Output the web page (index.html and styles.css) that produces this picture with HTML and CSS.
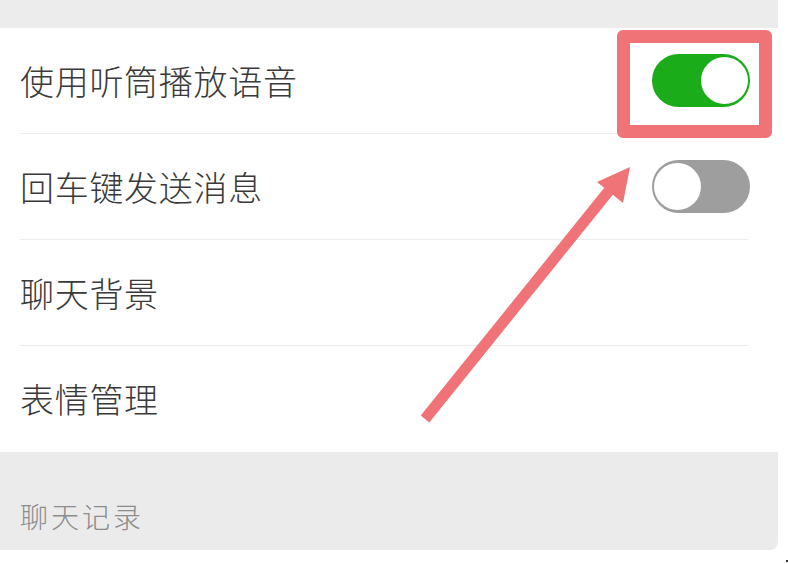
FILE: index.html
```html
<!DOCTYPE html>
<html lang="zh">
<head>
<meta charset="utf-8">
<link rel="stylesheet" href="styles.css">
</head>
<body>
<div class="page">
  <div class="panel">
    <div class="top-band"></div>
    <div class="list">
      <div class="row">
        <span class="label">使用听筒播放语音</span>
        <span class="switch on"><span class="knob"></span></span>
      </div>
      <div class="row">
        <span class="label">回车键发送消息</span>
        <span class="switch off"><span class="knob"></span></span>
      </div>
      <div class="row">
        <span class="label">聊天背景</span>
      </div>
      <div class="row last">
        <span class="label">表情管理</span>
      </div>
    </div>
    <div class="section-head">
      <span class="section-title">聊天记录</span>
    </div>
  </div>
  <div class="highlight"></div>
  <svg class="arrow" width="788" height="564" viewBox="0 0 788 564">
    <line x1="425" y1="419" x2="612" y2="187" stroke="#ef7377" stroke-width="11" stroke-linecap="butt"/>
    <polygon points="630,167 597,182 623,203" fill="#ef7377"/>
  </svg>
  <span class="dot"></span>
</div>
</body>
</html>
```
FILE: styles.css
```css
html, body {
  margin: 0;
  padding: 0;
  background: #ffffff;
}
.page {
  position: relative;
  width: 788px;
  height: 564px;
  overflow: hidden;
  font-family: "Noto Sans CJK SC", "Noto Sans", sans-serif;
}
.panel {
  width: 778px;
  display: flex;
  flex-direction: column;
}
.top-band {
  height: 28px;
  background: #ececec;
}
.list {
  background: #ffffff;
  display: flex;
  flex-direction: column;
}
.row {
  height: 106px;
  display: flex;
  align-items: center;
  justify-content: space-between;
  margin-left: 20px;
  margin-right: 30px;
  border-bottom: 1px solid #ececec;
  box-sizing: border-box;
}
.row.last {
  border-bottom: none;
}
.label {
  font-size: 34px;
  font-weight: 300;
  letter-spacing: 0.7px;
  color: #3a3a3a;
  line-height: 1;
}
.switch {
  width: 98px;
  height: 53px;
  margin-right: -2px;
  border-radius: 27px;
  box-sizing: border-box;
  display: flex;
  align-items: center;
  padding: 0 2px;
}
.switch.on {
  background: #1aad19;
  justify-content: flex-end;
}
.switch.off {
  background: #9e9e9e;
  justify-content: flex-start;
}
.knob {
  width: 47px;
  height: 47px;
  border-radius: 50%;
  background: #ffffff;
}
.section-head {
  height: 98px;
  background: #ebebeb;
  border-bottom-right-radius: 8px;
  display: flex;
  align-items: flex-end;
  padding: 0 0 16px 20px;
  box-sizing: border-box;
}
.section-title {
  font-size: 28px;
  font-weight: 300;
  color: #8c8c8c;
  line-height: 1.2;
  letter-spacing: 3px;
}
.highlight {
  position: absolute;
  left: 617px;
  top: 30px;
  width: 155px;
  height: 108px;
  box-sizing: border-box;
  border: 13px solid #ef7377;
  border-radius: 6px;
}
.arrow {
  position: absolute;
  left: 0;
  top: 0;
}
.dot {
  position: absolute;
  left: 786px;
  top: 560px;
  width: 2px;
  height: 2px;
  background: #333;
}
```
